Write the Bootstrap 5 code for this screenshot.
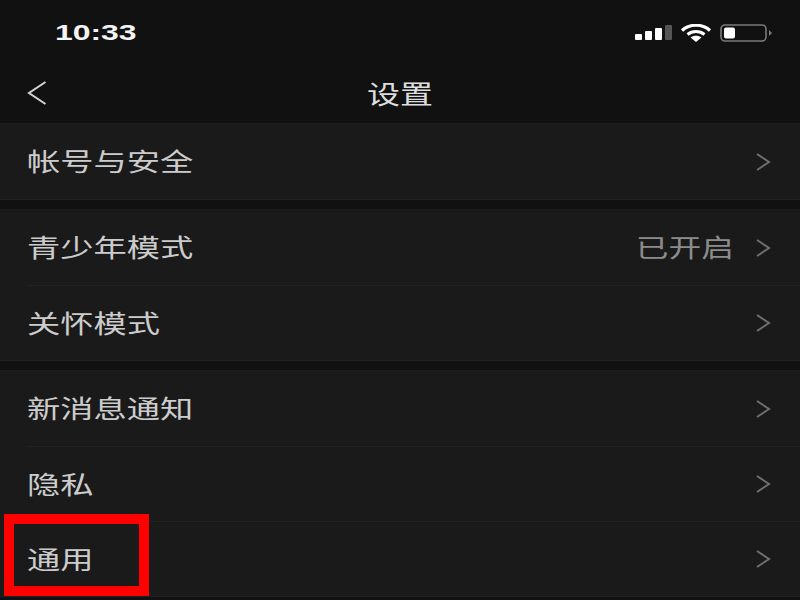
<!DOCTYPE html>
<html lang="zh-CN">
<head>
    <meta charset="UTF-8">
    <meta name="viewport" content="width=device-width, initial-scale=1.0">
    <title>设置</title>
    <link rel="stylesheet" href="https://cdn.jsdelivr.net/npm/bootstrap@5.3.0/dist/css/bootstrap.min.css">
    <style>
        body {
            background-color: #111111;
            font-family: "Noto Sans CJK SC", "Liberation Sans", sans-serif;
            overflow: hidden;
        }

        .phone {
            position: relative;
            width: 800px;
            height: 600px;
            overflow: hidden;
        }

        .status-bar {
            height: 66px;
            padding: 0 26px 0 55px;
        }

        .status-icons {
            gap: 8px;
        }

        .signal-icon {
            margin-right: -2px;
        }

        .clock {
            display: inline-block;
            font-family: "Liberation Sans", sans-serif;
            font-weight: 700;
            font-size: 22px;
            line-height: 1;
            color: #f4f4f4;
            transform: scaleX(1.45);
            transform-origin: left center;
        }

        .title-bar {
            height: 58px;
            padding: 0 28px 4px;
        }

        .page-title {
            font-size: 26px;
            line-height: 1;
            color: #dedede;
            transform: scaleX(1.27);
        }

        .group {
            background-color: #1a1a1a;
            box-shadow: 0 1px 0 #222222, 0 -1px 0 #1c1c1c;
            margin-bottom: 11px;
        }

        .item {
            height: 75px;
            padding-left: 27px;
        }

        .item-body {
            height: 100%;
            padding-right: 29px;
            padding-bottom: 2px;
        }

        .item + .item .item-body {
            border-top: 1px solid #222222;
        }

        .item-name, .item-value {
            display: inline-block;
            font-size: 25px;
            line-height: 1;
            white-space: nowrap;
        }

        .item-name {
            color: #cccccc;
            transform: scaleX(1.33);
            transform-origin: left center;
        }

        .item-value {
            color: #8c8c8c;
            margin-right: 21px;
            transform: scaleX(1.31);
            transform-origin: right center;
        }

        .chevron {
            margin-top: 2px;
        }

        .red-frame {
            position: absolute;
            left: 4px;
            top: 514px;
            width: 145px;
            height: 82px;
            border: 10px solid #ff0000;
        }
    </style>
</head>
<body>
<div class="phone">
    <div class="status-bar d-flex align-items-center justify-content-between">
        <span class="clock">10:33</span>
        <div class="status-icons d-flex align-items-center">
            <svg class="signal-icon" width="40" height="16" viewBox="0 0 40 16">
                <rect x="1" y="9" width="7" height="6" rx="1" fill="#fff"/>
                <rect x="11" y="6" width="7" height="9" rx="1" fill="#fff"/>
                <rect x="21" y="3" width="7" height="12" rx="1" fill="#fff"/>
                <rect x="31" y="0" width="7" height="15" rx="1" fill="#555"/>
            </svg>
            <svg width="32" height="18" viewBox="0 0 32 18">
                <path d="M2 6.5C10 -0.5 22 -0.5 30 6.5" fill="none" stroke="#fff" stroke-width="3.2"/>
                <path d="M7.5 10.5C12.5 6.5 19.5 6.5 24.5 10.5" fill="none" stroke="#fff" stroke-width="3"/>
                <path d="M10.5 13.5L16 18L21.5 13.5C18.5 11.2 13.5 11.2 10.5 13.5Z" fill="#fff"/>
            </svg>
            <svg width="54" height="18" viewBox="0 0 54 18">
                <rect x="1" y="1" width="45" height="16" rx="4" fill="none" stroke="#7a7a7a" stroke-width="1.6"/>
                <rect x="4" y="3.5" width="11" height="11" rx="2" fill="#fff"/>
                <path d="M49 6L52 9L49 12Z" fill="#7a7a7a"/>
            </svg>
        </div>
    </div>

    <div class="title-bar position-relative d-flex align-items-center justify-content-center">
        <svg class="position-absolute start-0 ms-4" width="24" height="26" viewBox="0 0 24 26">
            <path d="M21.500 2L5 13L21.500 24" fill="none" stroke="#d4d4d4" stroke-width="2"/>
        </svg>
        <span class="page-title">设置</span>
    </div>

    <div id="groups"></div>

    <div class="red-frame"></div>
</div>

<script>
    // rows of the settings list, one array per group
    const groups = [
        [{ name: '帐号与安全' }],
        [{ name: '青少年模式', value: '已开启' }, { name: '关怀模式' }],
        [{ name: '新消息通知' }, { name: '隐私' }, { name: '通用' }]
    ];

    const chevron = `<svg class="chevron" width="16" height="20" viewBox="0 0 16 20"><path d="M2 2L14 10L2 18" fill="none" stroke="#707070" stroke-width="2"/></svg>`;

    document.getElementById('groups').innerHTML = groups.map(rows => `
        <div class="group">
            ${rows.map(row => `
                <div class="item">
                    <div class="item-body d-flex align-items-center justify-content-between">
                        <span class="item-name">${row.name}</span>
                        <div class="d-flex align-items-center">
                            ${row.value ? `<span class="item-value">${row.value}</span>` : ''}
                            ${chevron}
                        </div>
                    </div>
                </div>`).join('')}
        </div>`).join('');
</script>
<script src="https://cdn.jsdelivr.net/npm/bootstrap@5.3.0/dist/js/bootstrap.bundle.min.js"></script>
</body>
</html>
